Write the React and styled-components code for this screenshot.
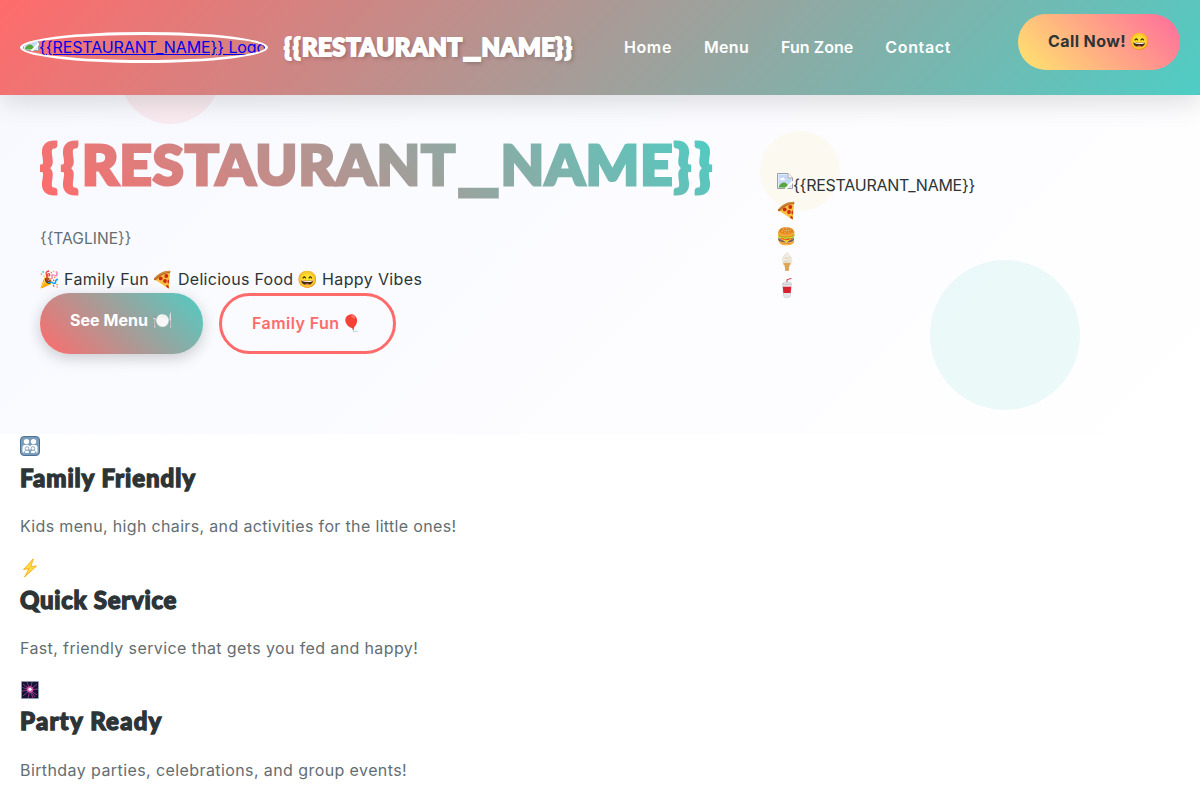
import React from "react";
import styled, { createGlobalStyle } from "styled-components";

const GlobalStyle = createGlobalStyle`
  * { box-sizing: border-box; margin: 0; padding: 0; }
  body {
    font-family: Inter, "Liberation Sans", sans-serif;
    font-size: 16px;
    line-height: 1.6;
    color: #2d3436;
    background: #fff;
    overflow: hidden;
  }
`;

const Header = styled.header`
  position: relative;
  z-index: 2;
  display: flex;
  align-items: center;
  height: 95px;
  padding: 0 20px;
  background: linear-gradient(135deg, #ff6b6b, #4ecdc4);
  box-shadow: 0 8px 25px rgba(0, 0, 0, 0.13);
`;

const LogoLink = styled.a`
  display: flex;
  align-items: center;
  width: 248px;
  height: 31px;
  margin-right: 16px;
  border: 3px solid #fff;
  border-radius: 50%;
  overflow: hidden;
  color: #0000ee;
  white-space: nowrap;
  text-decoration: underline;
`;

const Display = styled.div`
  font-family: Lato, "Liberation Sans", sans-serif;
  font-weight: 900;
  white-space: nowrap;
  line-height: 1.2;
`;

const BrandName = styled(Display)`
  width: 288px;
  font-size: 24px;
  color: #fff;
  -webkit-text-stroke: 1.9px #fff;
  text-shadow: 2px 2px 4px rgba(0, 0, 0, 0.3);
`;

const HeroTitle = styled(Display)`
  width: 673px;
  height: 72px;
  margin-bottom: 26px;
  font-size: 56px;
  line-height: 71px;
  color: transparent;
  -webkit-text-stroke: 3.2px transparent;
  background: linear-gradient(45deg, #ff6b6b, #4ecdc4);
  -webkit-background-clip: text;
  background-clip: text;
`;

const Seg = styled.span`
  letter-spacing: ${(p) => p.$ls}em;
`;

const Underscore = styled.span`
  font-size: 1.7em;
  font-weight: 700;
  line-height: 0;
  vertical-align: 0.02em;
`;

const Nav = styled.nav`
  display: flex;
  gap: 32px;
  margin-left: 52px;
`;

const NavLink = styled.a`
  width: ${(p) => p.$w}px;
  color: #fff;
  font-weight: 600;
  letter-spacing: ${(p) => p.$ls}px;
  white-space: nowrap;
`;

const Button = styled.a`
  display: flex;
  align-items: flex-start;
  width: ${(p) => p.$w}px;
  padding: 15px 30px;
  border-radius: 50px;
  font-weight: 700;
  white-space: nowrap;
`;

const CallButton = styled(Button)`
  margin: 0 0 11px auto;
  background: linear-gradient(45deg, #ffe66d, #ff6b9d);
  border-radius: 28px;
`;

const MenuButton = styled(Button)`
  color: #fff;
  background: linear-gradient(45deg, #ff6b6b, #4ecdc4);
  border-radius: 30px;
  box-shadow: 0 4px 15px rgba(0, 0, 0, 0.2);
`;

const FunButton = styled(Button)`
  padding-bottom: 14.4px;
  color: #ff6b6b;
  font-weight: 600;
  border: 3px solid #ff6b6b;
  border-radius: 31px;
`;

const Hero = styled.section`
  position: relative;
  display: grid;
  grid-template-columns: 673px 1fr;
  column-gap: 64px;
  height: 339px;
  padding: 33px 40px 0;
  background: linear-gradient(135deg, #f8f9ff, #fff);
`;

const Bubble = styled.div`
  position: absolute;
  left: ${(p) => p.$x}px;
  top: ${(p) => p.$y}px;
  width: ${(p) => p.$d}px;
  height: ${(p) => p.$d}px;
  border-radius: 50%;
  background: ${(p) => p.$c};
  opacity: 0.1;
`;

const Column = styled.div`
  position: relative;
`;

const Tagline = styled.p`
  margin-bottom: 15.8px;
  color: #636e72;
  font-size: 15.6px;
  line-height: 25.6px;
`;

const Row = styled.div`
  display: flex;
  align-items: center;
  height: 25.6px;
  white-space: nowrap;
`;

const Phrase = styled.span`
  display: block;
  width: ${(p) => (p.$w ? p.$w + "px" : "auto")};
  padding-left: ${(p) => p.$pl || 0}px;
  letter-spacing: ${(p) => p.$ls || 0}px;
`;

const Actions = styled.div`
  display: flex;
  gap: 16px;
`;

const Visual = styled.div`
  position: relative;
  padding-top: 44.6px;
`;

const Glyph = styled.span`
  flex: none;
  display: flex;
  align-items: center;
  justify-content: center;
  width: 20px;
  height: 25.6px;
  font-family: "Noto Color Emoji", sans-serif;
  font-size: 16.5px;
  font-weight: 400;
  line-height: 25.6px;
`;

const Features = styled.section`
  padding: 0 20px;
`;

const Feature = styled.article`
  height: 121.8px;
`;

const FeatureIcon = styled(Row)`
  height: 24.9px;
`;

const FeatureTitle = styled(Display)`
  margin-bottom: 16.8px;
  font-size: 24px;
  line-height: 38.4px;
  -webkit-text-stroke: 1.3px #2d3436;
  letter-spacing: ${(p) => p.$ls}px;
`;

const FeatureText = styled.p`
  color: #636e72;
  letter-spacing: ${(p) => p.$ls}px;
`;

const BrokenIcon = styled.svg`
  flex: none;
  margin-bottom: 9px;
`;

const BrokenImage = () => (
  <BrokenIcon width="16" height="16" viewBox="0 0 16 16">
    <path d="M.5 .5H11L15.500 5V15.500H.5Z" fill="#fff" stroke="#9aa0a6" />
    <path d="M1.500 1.500H10.500V5.500H14.500V14.500H1.500Z" fill="#c6d8f7" />
    <path d="M3 6.500c0-1.500 1.500-2 2-1 .5-1.500 2.500-1 2.300.5 1 0 1 1.300 0 1.300H4C3.300 7.300 3 7 3 6.500Z" fill="#fff" />
    <path d="M1.500 14.500c1-3.500 3.500-5 5.500-5S10.500 11 12 14.500Z" fill="#57a639" />
    <path d="M8.500 16 16 8.500" stroke="#fff" strokeWidth="2.200" />
    <path d="M11 .5V5h4.500" fill="#fff" stroke="#9aa0a6" />
  </BrokenIcon>
);

const Pizza = () => (
  <svg width="20" height="20" viewBox="0 0 20 20">
    <path d="M1.800 9.500C6 5 11.500 2.700 17 2.500L15.800 18.800Z" fill="#f9bd3d" />
    <path d="M1 8.500C5 3.500 11 .8 16.500 .8c1.200 0 1.300 2 .3 2.300C11.500 3.300 7 5.600 3 10 1.700 11 .3 9.500 1 8.500Z" fill="#b96b25" />
    <path d="M2 8.200C6 3.900 11 1.800 16.500 1.500" stroke="#df9b46" fill="none" />
    <g fill="#c92b16">
      <circle cx="7.700" cy="8.400" r="1.900" />
      <circle cx="13.300" cy="6" r="1.900" />
      <circle cx="12" cy="11" r="1.900" />
      <path d="M15.900 9.500v4c-2-.4-2-3.500 0-4ZM13 16.400c.3-1.600 2.300-1.600 2.800 0l-.2 2Z" />
    </g>
  </svg>
);

const Cone = () => (
  <svg width="20" height="20" viewBox="0 0 20 21">
    <path d="M5.800 11h8.400l-1 3.200h-.7L11.800 20H8.200L7.500 14.200h-.7Z" fill="#e8b263" />
    <path d="M6 12.500h8M7.500 15h5M8 17.500h4M9 12v8M11 12v8" stroke="#c48a40" strokeWidth=".4" />
    <path d="M10.500 .5c-.2 2-3.500 1.500-3.400 4-2 .7-2.200 2.500-1.200 3.300-1.400 1-.8 3.400.8 3.500h6.800c1.700-.2 2.200-2.500.7-3.500 1-1.200.4-2.700-1-3 .3-2-2.300-2-2.700-4.300Z" fill="#f3eee1" stroke="#d5cab2" strokeWidth=".5" />
    <path d="M7.500 6.200c2 .8 4 .5 5.500-.9M6.500 9.400c2.500.8 5 .4 7-1.200" fill="none" stroke="#c9bea7" strokeWidth=".7" />
  </svg>
);

const Cup = () => (
  <svg width="20" height="20" viewBox="0 0 20 20">
    <path d="M10 6V1.800l4.400-1.500" fill="none" stroke="#d4464c" strokeWidth="1.100" />
    <path d="M5.500 5.500C6 3.700 14 3.700 14.500 5.500l-1.200 13c-.8 1.500-5.800 1.500-6.600 0Z" fill="#e3e7e9" stroke="#b8bfc3" strokeWidth=".5" />
    <path d="M5.800 8.800h8.400l-.6 6.200H6.400Z" fill="#d7212f" />
    <path d="M5.500 5.700c2 1 7 1 9 0" fill="none" stroke="#aab1b5" strokeWidth=".6" />
  </svg>
);

const Family = () => (
  <svg width="20" height="20" viewBox="0 0 20 20">
    <rect x=".5" y=".5" width="19" height="19" rx="3.500" fill="#7b9dbd" stroke="#4d6f90" />
    <g fill="#fff">
      <circle cx="6.500" cy="5.600" r="2.700" />
      <circle cx="13.500" cy="5.600" r="2.700" />
      <path d="M2.500 16.500V11c0-3 7-3 7.500-.5.500-2.500 7.500-2.500 7.500.5v5.500H15l-1-3H6l-1 3Z" />
    </g>
    <g fill="#fff" stroke="#6488aa" strokeWidth=".7">
      <path d="M4.700 17.500v-2c0-2 4.600-2 4.600 0v2ZM10.700 17.500v-2c0-2 4.600-2 4.600 0v2Z" />
      <circle cx="7" cy="12.500" r="1.800" />
      <circle cx="13" cy="12.500" r="1.800" />
    </g>
  </svg>
);

const Bolt = () => (
  <svg width="20" height="20" viewBox="0 0 20 20">
    <path d="M13.300 .8 3.500 11.500 9 10.700 4.500 19 16.500 8 10.800 8.600Z" fill="#ffdc40" stroke="#f8ab20" strokeWidth=".9" strokeLinejoin="round" />
  </svg>
);

const Fireworks = () => (
  <svg width="20" height="20" viewBox="0 0 20 20">
    <rect x="1.300" y="1.300" width="17.400" height="17.400" fill="#101535" stroke="#b6bcc6" strokeWidth=".7" />
    <path d="M10 10 3 4M10 10 7 2M10 10 12 2M10 10 17 4M10 10 18 9M10 10 17 15M10 10 13 18M10 10 8 18M10 10 3 16M10 10 2 11M10 10 2.500 7.500M10 10 15 17" stroke="#b83c9b" strokeWidth=".8" />
    <circle cx="10" cy="9.500" r="3.300" fill="#e561b5" opacity=".8" />
    <circle cx="10" cy="9.300" r="1.600" fill="#fff" />
  </svg>
);

const NameText = () => (
  <>
    <Seg $ls={0.066}>{"{{"}</Seg>
    <Seg $ls={0.022}>RESTAURANT</Seg>
    <Underscore>_</Underscore>
    <Seg $ls={0.022}>NAME</Seg>
    <Seg $ls={0.066}>{"}}"}</Seg>
  </>
);

const links = [
  { label: "Home", w: 48, ls: 0.6 },
  { label: "Menu", w: 45, ls: 0.3 },
  { label: "Fun Zone", w: 72.3, ls: 0.05 },
  { label: "Contact", w: 66, ls: 0.65 },
];

const features = [
  { icon: <Family />, title: "Family Friendly", tls: 0.95, text: "Kids menu, high chairs, and activities for the little ones!", ls: 0.34 },
  { icon: <Bolt />, title: "Quick Service", tls: 0.7, text: "Fast, friendly service that gets you fed and happy!", ls: 0.38 },
  { icon: <Fireworks />, title: "Party Ready", tls: 1.2, text: "Birthday parties, celebrations, and group events!", ls: 0.41 },
];

export default function App() {
  return (
    <>
      <GlobalStyle />
      <Header>
        <LogoLink>
          <BrokenImage />
          <Phrase $ls={-0.1}>{"{{RESTAURANT_NAME}} Logo"}</Phrase>
        </LogoLink>
        <BrandName><NameText /></BrandName>
        <Nav>
          {links.map((l) => (
            <NavLink key={l.label} $w={l.w} $ls={l.ls}>{l.label}</NavLink>
          ))}
        </Nav>
        <CallButton $w={162}>
          <Phrase $w={82} $ls={0.4}>Call Now!</Phrase>
          <Glyph>😄</Glyph>
        </CallButton>
      </Header>
      <Hero>
        <Bubble $x={120} $y={-71} $d={100} $c="#ff6b6b" />
        <Bubble $x={760} $y={36} $d={80} $c="#ffe66d" />
        <Bubble $x={930} $y={165} $d={150} $c="#4ecdc4" />
        <Column>
          <HeroTitle as="h1"><NameText /></HeroTitle>
          <Tagline>{"{{TAGLINE}}"}</Tagline>
          <Row>
            <Glyph>🎉</Glyph>
            <Phrase $w={93} $ls={0.4} $pl={4}>Family Fun</Phrase>
            <Glyph><Pizza /></Glyph>
            <Phrase $w={125} $ls={0.28} $pl={5}>Delicious Food</Phrase>
            <Glyph>😄</Glyph>
            <Phrase $ls={0.38} $pl={4}>Happy Vibes</Phrase>
          </Row>
          <Actions>
            <MenuButton $w={163}>
              <Phrase $w={83} $ls={0.05}>See Menu</Phrase>
              <Glyph>🍽️</Glyph>
            </MenuButton>
            <FunButton $w={177}>
              <Phrase $w={90} $ls={0.44}>Family Fun</Phrase>
              <Glyph>🎈</Glyph>
            </FunButton>
          </Actions>
        </Column>
        <Visual>
          <Row>
            <BrokenImage />
            <Phrase $ls={-0.25}>{"{{RESTAURANT_NAME}}"}</Phrase>
          </Row>
          <Row><Glyph><Pizza /></Glyph></Row>
          <Row><Glyph>🍔</Glyph></Row>
          <Row><Glyph><Cone /></Glyph></Row>
          <Row><Glyph><Cup /></Glyph></Row>
        </Visual>
      </Hero>
      <Features>
        {features.map((f) => (
          <Feature key={f.title}>
            <FeatureIcon><Glyph>{f.icon}</Glyph></FeatureIcon>
            <FeatureTitle as="h3" $ls={f.tls}>{f.title}</FeatureTitle>
            <FeatureText $ls={f.ls}>{f.text}</FeatureText>
          </Feature>
        ))}
      </Features>
    </>
  );
}
